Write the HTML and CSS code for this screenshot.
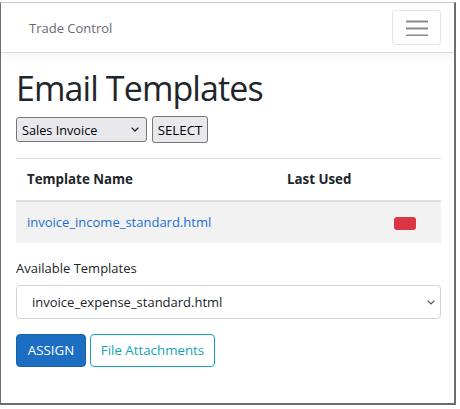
FILE: index.html
```html
<!DOCTYPE html>
<html lang="en">
<head>
<meta charset="utf-8">
<title>Email Templates</title>
<link rel="stylesheet" href="styles.css">
</head>
<body>
<div class="window">
  <nav class="navbar">
    <span class="brand">Trade Control</span>
    <button class="toggler" type="button" aria-label="Toggle navigation">
      <svg width="24" height="16" viewBox="0 0 24 16" aria-hidden="true">
        <path d="M1 1.5h22M1 8.5h22M1 15.5h22" stroke="#8a8a8a" stroke-width="2" fill="none"/>
      </svg>
    </button>
  </nav>
  <main class="content">
    <h1 class="title">Email Templates</h1>
    <div class="picker">
      <div class="native-select">
        <select class="native">
          <option>Sales Invoice</option>
        </select>
        <svg class="chev chev-small" width="8" height="5" viewBox="0 0 8 5" aria-hidden="true"><path d="M0.6 0.6L4 4L7.4 0.6" stroke="#222" stroke-width="1.3" fill="none"/></svg>
      </div>
      <button class="native-btn" type="button">SELECT</button>
    </div>
    <hr class="divider">
    <table class="templates">
      <thead>
        <tr><th class="c1">Template Name</th><th class="c2">Last Used</th><th class="c3"></th></tr>
      </thead>
      <tbody>
        <tr>
          <td class="c1"><a href="#" class="link">invoice_income_standard.html</a></td>
          <td class="c2"></td>
          <td class="c3"><span class="badge"></span></td>
        </tr>
      </tbody>
    </table>
    <label class="field-label" for="avail">Available Templates</label>
    <div class="form-select-wrap">
      <select id="avail" class="form-select">
        <option>invoice_expense_standard.html</option>
      </select>
      <svg class="chev chev-big" width="8" height="5" viewBox="0 0 8 5" aria-hidden="true"><path d="M0.6 0.6L4 4L7.4 0.6" stroke="#555" stroke-width="1.2" fill="none"/></svg>
    </div>
    <div class="actions">
      <button class="btn btn-primary" type="button">ASSIGN</button>
      <button class="btn btn-outline-info" type="button">File Attachments</button>
    </div>
  </main>
</div>
</body>
</html>
```

FILE: styles.css
```css
* { box-sizing: border-box; }

html, body {
  margin: 0;
  padding: 0;
  background: #ffffff;
}

body {
  font-family: "Open Sans", "Noto Sans", sans-serif;
  font-size: 13px;
  color: #212529;
}

.window {
  margin-top: 2px;
  width: 456px;
  height: 403px;
  border-left: 1px solid #6d6d6d;
  border-right: 2px solid #6d6d6d;
  border-top: 1px solid #c9c9c9;
  border-bottom: 2px solid #6d6d6d;
  overflow: hidden;
}

.navbar {
  height: 50px;
  display: flex;
  align-items: center;
  justify-content: space-between;
  padding: 0 13px 0 28px;
  border-bottom: 1px solid #dcdcdc;
  box-shadow: 0 4px 12px rgba(0, 0, 0, 0.05);
  position: relative;
}

.brand {
  font-size: 13px;
  color: #6a6a72;
}

.toggler {
  width: 49px;
  height: 35px;
  border: 1px solid rgba(0, 0, 0, 0.1);
  border-radius: 4px;
  background: #fff;
  display: flex;
  align-items: center;
  justify-content: center;
  padding: 0;
}

.content {
  padding: 12px 13px 0 15px;
}

.title {
  margin: 0;
  font-size: 34px;
  line-height: 46px;
  font-weight: 400;
  color: #212529;
  letter-spacing: -0.9px;
}

.picker {
  margin-top: 5px;
  display: flex;
  align-items: center;
  gap: 5px;
  height: 27px;
}

.native-select {
  position: relative;
  width: 131px;
  height: 25px;
}

.native {
  appearance: none;
  -webkit-appearance: none;
  width: 100%;
  height: 25px;
  border: 1px solid #767676;
  border-radius: 3px;
  background: #e9e9ed;
  font-family: "Open Sans", sans-serif;
  font-size: 12.7px;
  color: #000;
  padding: 0 0 0 5px;
}

.chev {
  position: absolute;
  pointer-events: none;
}

.chev-small {
  right: 8px;
  top: 10px;
}

.native-btn {
  height: 27px;
  width: 56px;
  border: 1px solid #767676;
  border-radius: 3px;
  background: #e9e9ed;
  font-family: "Open Sans", sans-serif;
  font-size: 13.3px;
  color: #000;
  padding: 0;
}

.divider {
  margin: 15px 0 0 0;
  border: 0;
  border-top: 1px solid #dcdcdc;
  height: 0;
}

.templates {
  width: 425px;
  border-collapse: collapse;
  margin-bottom: 14px;
  table-layout: fixed;
}

.templates th,
.templates td {
  padding: 10px 11px;
  line-height: 21px;
  text-align: left;
  vertical-align: middle;
}

.templates th {
  font-weight: 700;
  font-size: 13.3px;
  border-bottom: 2px solid #dcdfe3;
}

.templates tbody tr {
  background: #f2f2f2;
}

.templates .c1 { width: 260px; }
.templates .c2 { width: 107px; }
.templates .c3 { width: 58px; }

.link {
  color: #1a6dd6;
  text-decoration: none;
}

.badge {
  display: inline-block;
  width: 22px;
  height: 13px;
  border-radius: 3px;
  background: #dc3545;
  vertical-align: middle;
}

.field-label {
  display: block;
  line-height: 21px;
  padding-top: 1px;
  margin-bottom: 6px;
}

.form-select-wrap {
  position: relative;
  width: 425px;
}

.form-select {
  appearance: none;
  -webkit-appearance: none;
  display: block;
  width: 100%;
  height: 34px;
  border: 1px solid #ced4da;
  border-radius: 4px;
  background: #fff;
  font-family: "Open Sans", sans-serif;
  font-size: 13px;
  color: #212529;
  padding: 0 30px 0 15px;
}

.chev-big {
  right: 6px;
  top: 15px;
}

.actions {
  margin-top: 15px;
  display: flex;
  gap: 4px;
}

.btn {
  height: 33px;
  border-radius: 4px;
  font-family: "Open Sans", sans-serif;
  font-size: 13.3px;
  line-height: 21px;
  padding: 0;
}

.btn-primary {
  background: #1b6ec2;
  border: 1px solid #1861ac;
  color: #fff;
  width: 70px;
}

.btn-outline-info {
  background: #fff;
  border: 1px solid #17a2b8;
  color: #17a2b8;
  width: 125px;
}
```
